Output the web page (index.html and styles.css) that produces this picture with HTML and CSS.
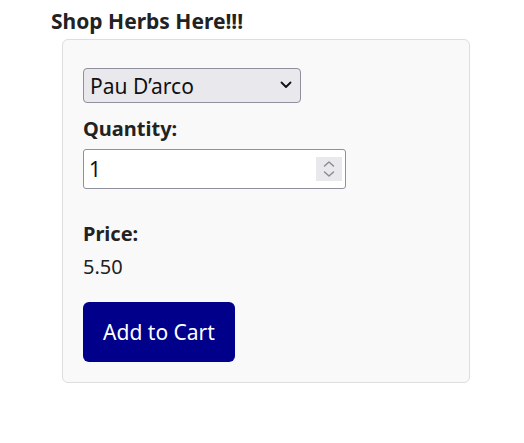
FILE: index.html
```html
<!DOCTYPE html>
<html>
<head>
<meta charset="utf-8">
<link rel="stylesheet" href="styles.css">
</head>
<body>
<h2 class="title">Shop Herbs Here!!!</h2>
<div class="card">
  <div class="select-wrap">
    <select class="herb">
      <option>Pau D’arco</option>
    </select>
    <svg class="chev" width="12" height="8" viewBox="0 0 12 8"><path d="M1.5 1.5 L6 6 L10.5 1.5" fill="none" stroke="#111" stroke-width="1.8" stroke-linecap="round" stroke-linejoin="round"/></svg>
  </div>
  <label class="label qty-label">Quantity:</label>
  <div class="qty-wrap">
    <input class="qty" type="number" value="1" min="1">
    <span class="spin">
      <svg width="26" height="24" viewBox="0 0 26 24"><path d="M8.5 9 L13 5 L17.5 9" fill="none" stroke="#8a8a8a" stroke-width="1.4" stroke-linecap="round" stroke-linejoin="round"/><path d="M8.5 15 L13 19 L17.5 15" fill="none" stroke="#8a8a8a" stroke-width="1.4" stroke-linecap="round" stroke-linejoin="round"/></svg>
    </span>
  </div>
  <label class="label price-label">Price:</label>
  <div class="price">5.50</div>
  <button class="cart">Add to Cart</button>
</div>
</body>
</html>
```
FILE: styles.css
```css
body {
  margin: 0;
  font-family: "Noto Sans", "Open Sans", sans-serif;
  color: #222;
  background: #fff;
}
.title {
  margin: 0;
  padding: 7px 0 0 51px;
  font-size: 21px;
  line-height: 28px;
  font-weight: 700;
  color: #222;
}
.card {
  margin: 4px 0 0 62px;
  width: 366px;
  padding: 20px;
  border: 1px solid #ddd;
  border-radius: 6px;
  background: #f9f9f9;
  display: flex;
  flex-direction: column;
  align-items: flex-start;
}
.select-wrap {
  position: relative;
  margin-top: 8px;
}
.herb {
  display: block;
  appearance: none;
  -webkit-appearance: none;
  width: 218px;
  height: 35px;
  font-family: inherit;
  font-size: 21px;
  color: #111;
  background: #e9e9ed;
  border: 1px solid #8f8f9d;
  border-radius: 4px;
  padding: 0 6px;
  margin: 0;
}
.chev {
  position: absolute;
  left: 197px;
  top: 13px;
  pointer-events: none;
}
.label {
  font-weight: 700;
  font-size: 20px;
  line-height: 26px;
  color: #222;
}
.qty-label {
  margin-top: 13px;
}
.qty-wrap {
  position: relative;
  margin-top: 7px;
}
.qty {
  display: block;
  appearance: textfield;
  -moz-appearance: textfield;
  width: 263px;
  height: 40px;
  box-sizing: border-box;
  font-family: inherit;
  font-size: 21px;
  color: #111;
  background: #fff;
  border: 1px solid #8f8f9d;
  border-radius: 3px;
  padding: 0 5px;
  margin: 0;
}
.qty::-webkit-inner-spin-button,
.qty::-webkit-outer-spin-button {
  -webkit-appearance: none;
  margin: 0;
}
.spin {
  position: absolute;
  left: 233px;
  top: 8px;
  width: 26px;
  height: 24px;
  background: #e9e9ed;
  display: block;
}
.spin svg {
  display: block;
}
.price-label {
  margin-top: 32px;
}
.price {
  margin-top: 7px;
  font-size: 20px;
  line-height: 26px;
  color: #222;
}
.cart {
  margin-top: 22px;
  width: 152px;
  height: 60px;
  background: #00008b;
  color: #fff;
  border: none;
  border-radius: 6px;
  font-family: inherit;
  font-size: 21px;
  padding: 0;
  cursor: pointer;
}
```
